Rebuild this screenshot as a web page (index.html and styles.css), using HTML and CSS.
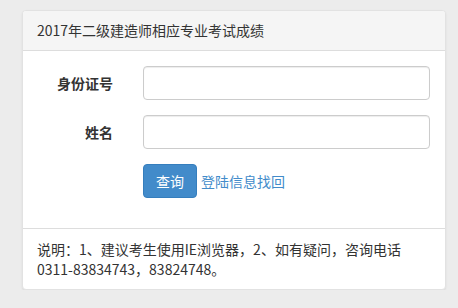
FILE: index.html
```html
<!DOCTYPE html>
<html lang="zh-CN">
<head>
  <meta charset="UTF-8" />
  <title>成绩查询</title>
  <link rel="stylesheet" href="styles.css">
</head>
<body>
  <div class="panel">
    <div class="panel-heading">2017年二级建造师相应专业考试成绩</div>
    <div class="panel-body">
      <form class="form">
        <div class="form-group">
          <label class="label" for="idcard">身份证号</label>
          <input type="text" id="idcard" class="input" />
        </div>
        <div class="form-group">
          <label class="label" for="name">姓名</label>
          <input type="text" id="name" class="input" />
        </div>
        <div class="form-group">
          <span></span>
          <div class="actions">
            <button type="button" class="btn">查询</button>
            <a href="#" class="link">登陆信息找回</a>
          </div>
        </div>
      </form>
    </div>
    <div class="panel-footer">
      说明：1、建议考生使用IE浏览器，2、如有疑问，咨询电话0311-83834743，83824748。
    </div>
  </div>
</body>
</html>
```

FILE: styles.css
```css
* { box-sizing: border-box; }
body {
  margin: 0;
  padding: 10px 12px 0 22px;
  background: #ececec;
  font-family: "Noto Sans CJK SC", "Microsoft YaHei", sans-serif;
  font-size: 14px;
  line-height: 20px;
  color: #333;
}
.panel {
  width: 424px;
  background: #fff;
  border: 1px solid #e2e2e2;
  border-radius: 4px;
  box-shadow: 0 1px 2px rgba(0,0,0,0.08);
}
.panel-heading {
  padding: 9px 14px 10px;
  background: #f5f5f5;
  border-bottom: 1px solid #ddd;
  border-radius: 3px 3px 0 0;
}
.panel-body { padding: 15px; }
.form-group {
  display: grid;
  grid-template-columns: 75px 1fr;
  column-gap: 30px;
  margin-bottom: 15px;
}
.label {
  text-align: right;
  font-weight: bold;
  padding-top: 7px;
}
.input {
  height: 34px;
  width: 100%;
  border: 1px solid #ccc;
  border-radius: 4px;
  padding: 6px 12px;
  font: inherit;
  box-shadow: inset 0 1px 1px rgba(0,0,0,0.075);
}
.actions {
  display: flex;
  align-items: center;
  gap: 4px;
}
.btn {
  height: 34px;
  padding: 6px 12px;
  border: 1px solid #357ebd;
  border-radius: 4px;
  background: #428bca;
  color: #fff;
  font: inherit;
}
.link {
  color: #428bca;
  text-decoration: none;
}
.panel-footer {
  padding: 10px 14px;
  border-top: 1px solid #ddd;
}
```
